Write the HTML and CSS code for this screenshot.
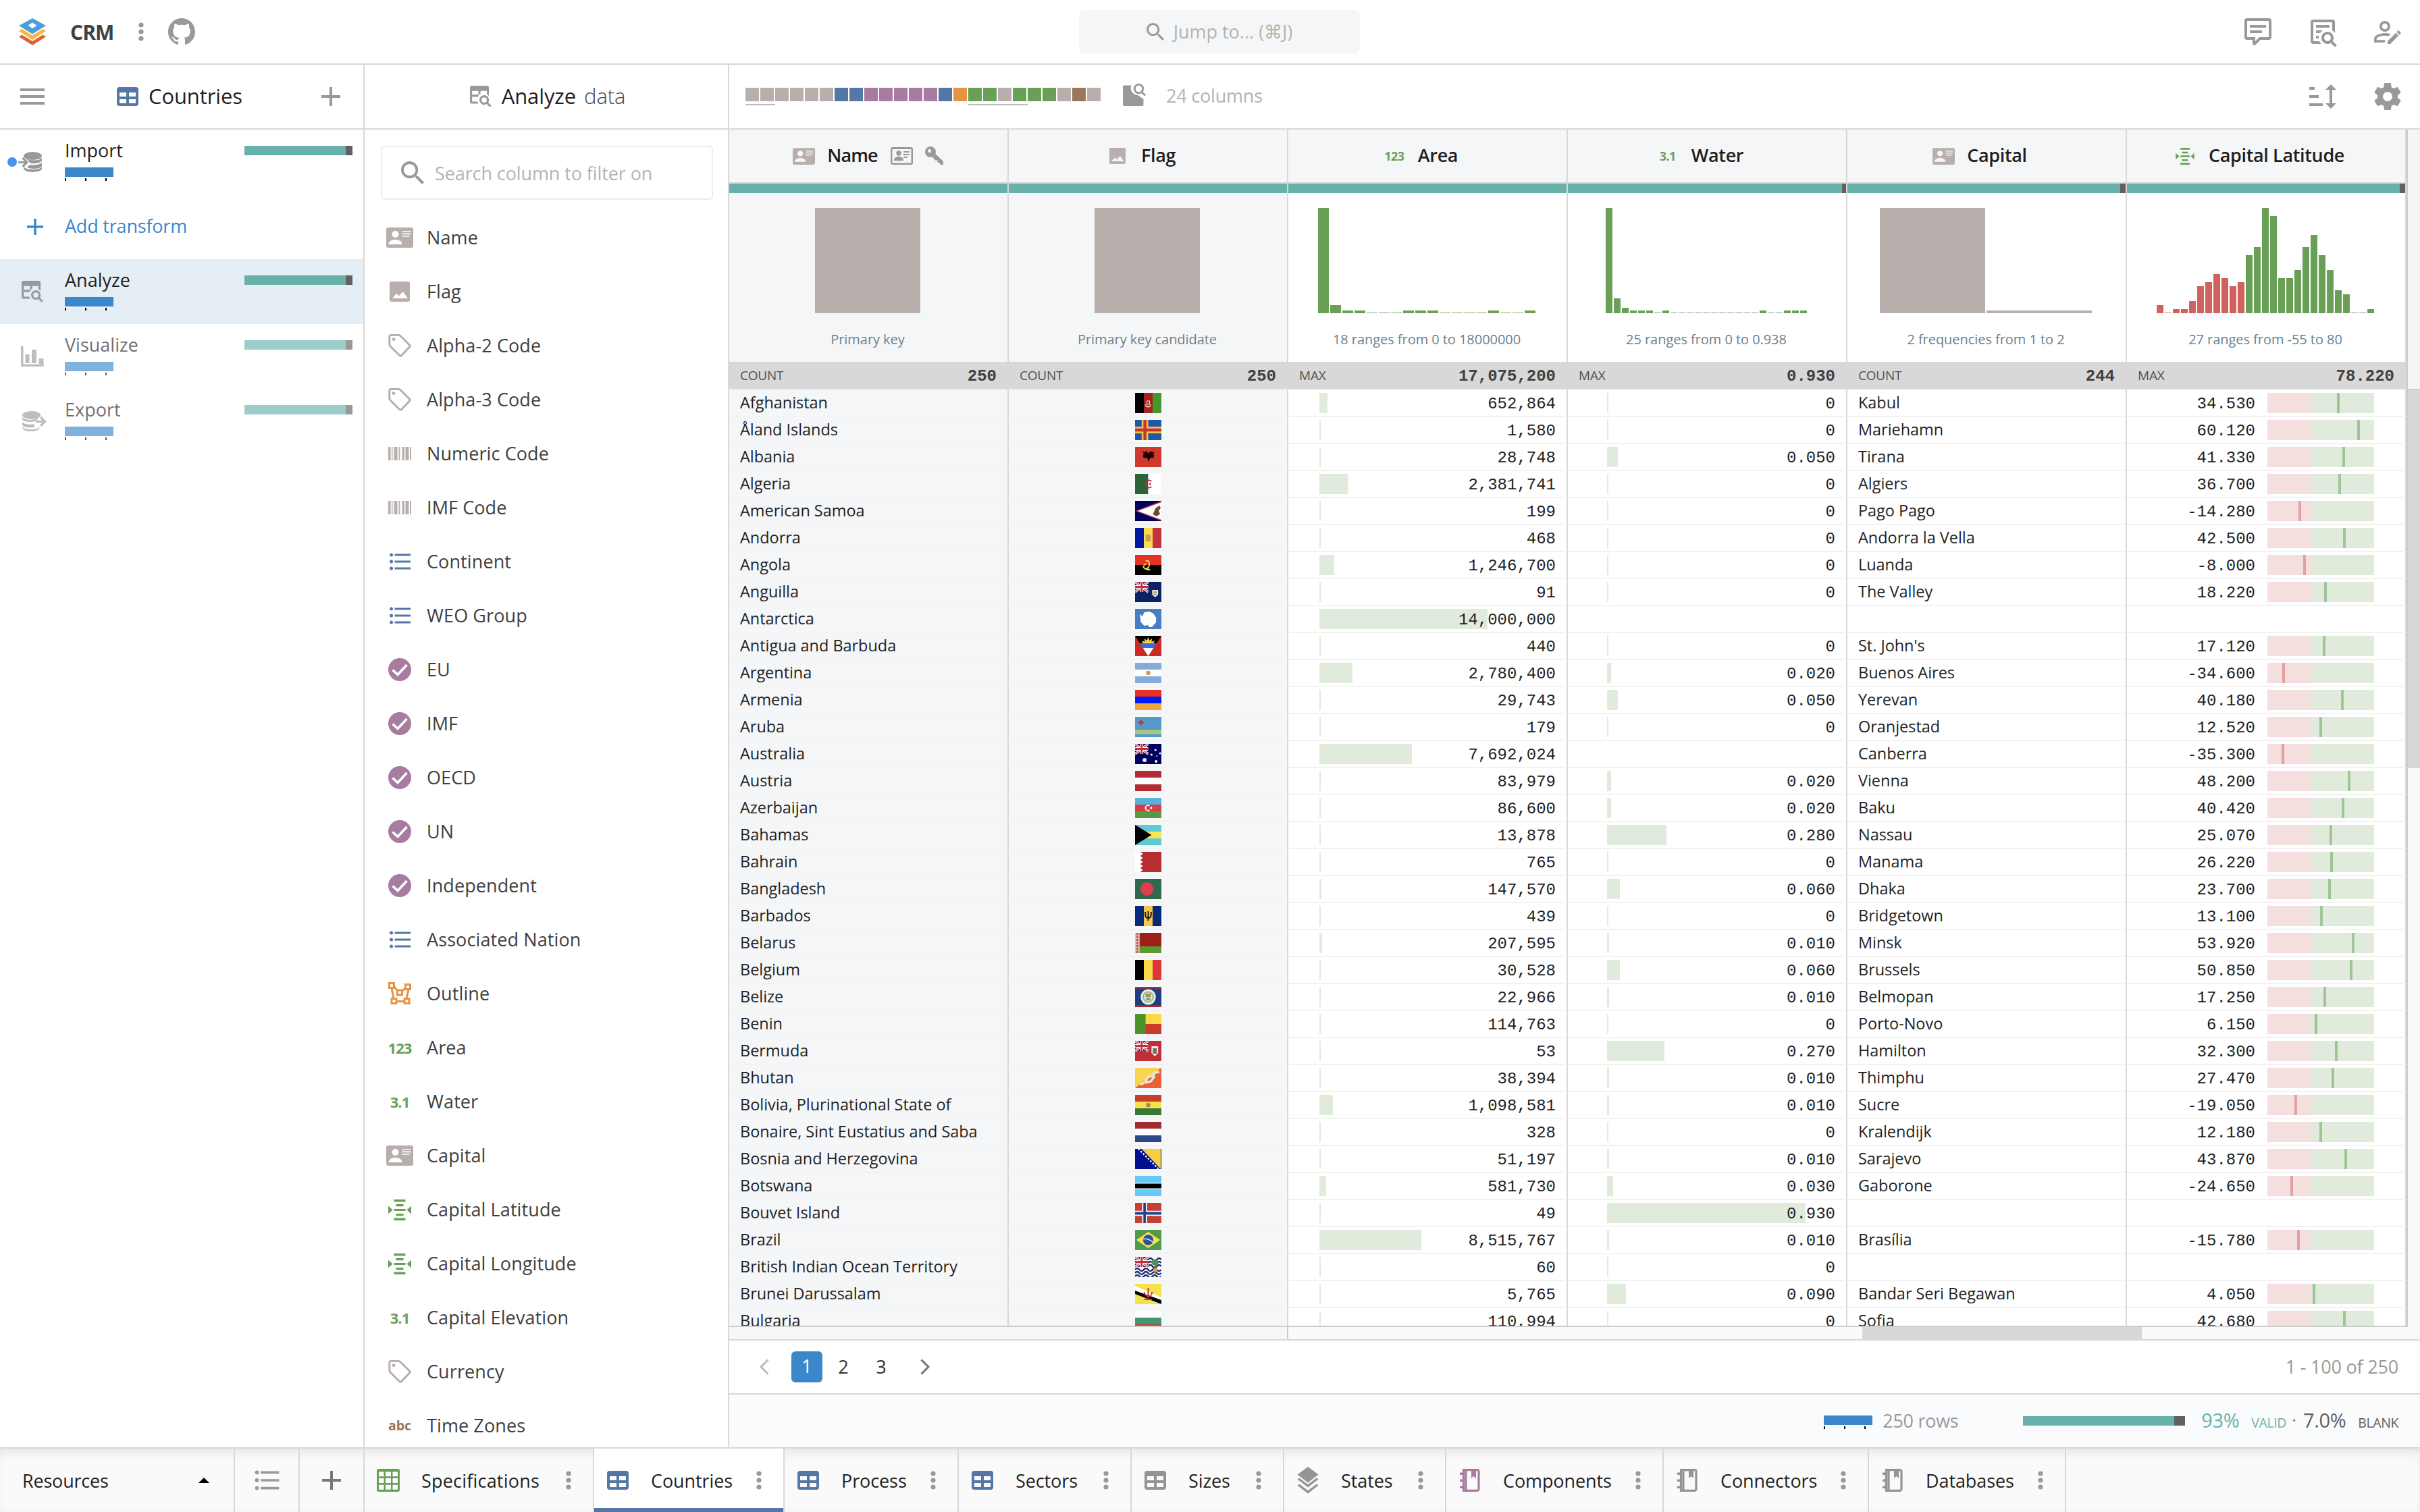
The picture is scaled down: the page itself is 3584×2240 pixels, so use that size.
FILE: index.html
```html
<!DOCTYPE html>
<html lang="en">
<head>
<meta charset="utf-8">
<title>CRM – Countries</title>
<link rel="stylesheet" href="styles.css">
</head>
<body>
<svg class="defs" aria-hidden="true">
  <symbol id="i-logo" viewBox="0 0 40 40"><path fill="#e0603a" d="M0 27.500l4.500-3L20 34l15.500-9.500 4.500 3L20 40z"/><path fill="#f5b73d" d="M0 19l4.500-3L20 25.500 35.500 16l4.500 3-20 13z"/><path fill="#4c9fd8" fill-rule="evenodd" d="M20 0l20 11-20 12.500L0 11zM20 6.500L13.500 10.700 20 15l6.500-4.300z"/></symbol>
  <symbol id="i-dots" viewBox="0 0 8 28"><circle cx="4" cy="4" r="3.600"/><circle cx="4" cy="14" r="3.600"/><circle cx="4" cy="24" r="3.600"/></symbol>
  <symbol id="i-github" viewBox="0 0 16 16"><path d="M8 0C3.580 0 0 3.580 0 8c0 3.540 2.290 6.530 5.470 7.590.4.070.55-.17.55-.38 0-.19-.01-.82-.01-1.490-2.010.37-2.530-.49-2.690-.94-.09-.23-.48-.94-.82-1.130-.28-.15-.68-.52-.01-.53.63-.01 1.080.58 1.230.82.72 1.210 1.870.87 2.330.66.07-.52.28-.87.51-1.070-1.780-.2-3.640-.89-3.640-3.950 0-.87.31-1.590.82-2.150-.08-.2-.36-1.020.08-2.120 0 0 .67-.21 2.200.82.64-.18 1.320-.27 2-.27.68 0 1.360.09 2 .27 1.530-1.040 2.200-.82 2.200-.82.44 1.100.16 1.920.08 2.120.51.56.82 1.270.82 2.150 0 3.070-1.870 3.750-3.650 3.950.29.25.54.73.54 1.480 0 1.070-.01 1.930-.01 2.200 0 .21.15.46.55.38A8.013 8.013 0 0016 8c0-4.420-3.580-8-8-8z"/></symbol>
  <symbol id="i-search" viewBox="3 3 17.500 17.500"><path d="M9.500 3A6.500 6.500 0 0 1 16 9.500c0 1.610-.59 3.090-1.560 4.230l.27.27h.79l5 5-1.500 1.500-5-5v-.79l-.27-.27A6.516 6.516 0 0 1 9.500 16a6.500 6.500 0 1 1 0-13m0 2a4.500 4.500 0 1 0 0 9 4.500 4.500 0 0 0 0-9z"/></symbol>
  <symbol id="i-comment" viewBox="0 0 24 24"><path d="M9 22a1 1 0 0 1-1-1v-3H4a2 2 0 0 1-2-2V4a2 2 0 0 1 2-2h16a2 2 0 0 1 2 2v12a2 2 0 0 1-2 2h-6.100l-3.700 3.710c-.2.19-.45.29-.7.29H9m1-6v3.080L13.080 16H20V4H4v12h6M6 7h12v2H6V7m0 4h9v2H6v-2z"/></symbol>
  <symbol id="i-docsearch" viewBox="0 0 24 24"><path d="M5 3h14a2 2 0 0 1 2 2v8.030a6.500 6.500 0 0 0-2-2.030V5H5v14h4.500c.31.75.76 1.420 1.310 2H5a2 2 0 0 1-2-2V5a2 2 0 0 1 2-2zM7 7h10v2H7zM7 11h5.030A6.400 6.400 0 0 0 10 13H7zM7 15h2.180c-.11.48-.18.98-.18 1.500V17H7zM15.500 12a4.500 4.500 0 0 1 3.810 6.900l3.080 3.100L21 23.390l-3.120-3.070A4.500 4.500 0 1 1 15.500 12m0 2a2.500 2.500 0 1 0 0 5 2.500 2.500 0 0 0 0-5z"/></symbol>
  <symbol id="i-useredit" viewBox="0 0 24 24"><path d="M21.700 13.350l-1 1-2.050-2.050 1-1a.55.55 0 0 1 .77 0l1.280 1.280c.21.21.21.56 0 .77M12 18.940l6.060-6.060 2.050 2.050L14.060 21H12v-2.060M10 13c-2.670 0-8 1.340-8 4v3h8v-1.900H3.900V17c0-.64 3.130-2.100 6.100-2.100.96 0 1.940.15 2.830.37l1.510-1.510C12.900 13.300 11.400 13 10 13zM10 4a4 4 0 1 0 0 8 4 4 0 0 0 0-8m0 1.900a2.100 2.100 0 1 1 0 4.200 2.100 2.100 0 0 1 0-4.200z"/></symbol>
  <symbol id="i-sort" viewBox="0 0 24 24"><path d="M2 5h4v2H2zM2 11h7v2H2zM2 17h10v2H2zM18 3l4 4h-3v10h3l-4 4-4-4h3V7h-3z"/></symbol>
  <symbol id="i-gear" viewBox="0 0 24 24"><path d="M12 15.500A3.500 3.500 0 0 1 8.500 12 3.500 3.500 0 0 1 12 8.500a3.500 3.500 0 0 1 3.500 3.500 3.500 3.500 0 0 1-3.500 3.500m7.430-2.530c.04-.32.07-.64.07-.97 0-.33-.03-.66-.07-1l2.110-1.630c.19-.15.24-.42.12-.64l-2-3.460c-.12-.22-.39-.31-.61-.22l-2.490 1c-.52-.39-1.060-.73-1.690-.98l-.37-2.650A.506.506 0 0 0 14 2h-4c-.25 0-.46.18-.5.42l-.37 2.650c-.63.25-1.170.59-1.690.98l-2.490-1c-.22-.09-.49 0-.61.22l-2 3.460c-.13.22-.07.49.12.64L4.570 11c-.04.34-.07.67-.07 1 0 .33.03.65.07.97l-2.110 1.660c-.19.15-.25.42-.12.64l2 3.460c.12.22.39.3.61.22l2.490-1.010c.52.4 1.060.74 1.690.99l.37 2.650c.04.24.25.42.5.42h4c.25 0 .46-.18.5-.42l.37-2.650c.63-.26 1.170-.59 1.690-.99l2.490 1.010c.22.08.49 0 .61-.22l2-3.460c.12-.22.07-.49-.12-.64l-2.110-1.660z"/></symbol>
  <symbol id="i-menu" viewBox="0 0 36 24"><path d="M0 0h36v4H0zM0 10h36v4H0zM0 20h36v4H0z"/></symbol>
  <symbol id="i-table" viewBox="0 0 32 28"><path fill-rule="evenodd" d="M4 0h24a4 4 0 0 1 4 4v20a4 4 0 0 1-4 4H4a4 4 0 0 1-4-4V4a4 4 0 0 1 4-4zM4 8v6h10V8zM18 8v6h10V8zM4 18v6h10v-6zM18 18v6h10v-6z"/></symbol>
  <symbol id="i-plus" viewBox="0 0 28 28"><path d="M12 0h4v12h12v4H16v12h-4V16H0v-4h12z"/></symbol>
  <symbol id="i-tsearch" viewBox="2 3 20.500 20.500"><path d="M4 3h14a2 2 0 0 1 2 2v7.800a6.500 6.500 0 0 0-2-1.800V8h-6v2.500l-2 1.700V8H4v3.500h6v2H4V18h5.200c.2.750.5 1.400.9 2H4a2 2 0 0 1-2-2V5a2 2 0 0 1 2-2zM15.500 12a4.500 4.500 0 0 1 3.810 6.900l3.080 3.100L21 23.390l-3.120-3.070A4.500 4.500 0 1 1 15.500 12m0 2a2.500 2.500 0 1 0 0 5 2.500 2.500 0 0 0 0-5z"/></symbol>
  <symbol id="i-import" viewBox="0 0 36 30"><ellipse cx="21.500" cy="6" rx="13.500" ry="6"/><path d="M11 9.500c3 3 21 5 24-1v4.500c-2 4-12 5-17 3.500zM17 19c6 1 15 0 18-3v5c-2 4.500-16 5-22 2zM8.500 22.500c5 5 22 4.500 26.500 0V25c-2 6.500-24 6.500-27 0z"/><path fill="none" stroke="currentColor" stroke-width="3.200" d="M0 15.500h11.500M6.500 9l6.500 6.500L6.500 22"/></symbol>
  <symbol id="i-export" viewBox="0 0 36 30"><ellipse cx="13.500" cy="6" rx="13.500" ry="6"/><path d="M0 8.500c3 6 19 5.500 24 .5l-3 5.500c-6 2-18 2.500-21-2zM0 16c3 3.500 10 4.500 18 3.500v4.500C12 24.500 2 25 0 20.500zM0 23.500c4 4.500 17 5 23 2l3-1.500c-2 8-23 8-26 1z"/><path fill="none" stroke="currentColor" stroke-width="3.200" d="M20 15.500h12.500M27 9l6.500 6.500L27 22"/></symbol>
  <symbol id="i-chart" viewBox="0 0 34 30"><path d="M0 0h3.500v27H0zM0 26.500h34V30H0zM6.500 12h6v13h-6zM16 5h7v20h-7zM26.500 18h7v8h-7z"/></symbol>
  <symbol id="i-card" viewBox="0 0 40 30"><path fill-rule="evenodd" d="M3 0h34a3 3 0 0 1 3 3v24a3 3 0 0 1-3 3H3a3 3 0 0 1-3-3V3a3 3 0 0 1 3-3zM13.500 5a5 5 0 1 0 0 10 5 5 0 0 0 0-10zM3.500 25h20c0-4-4-7-10-7s-10 3-10 7zM23.500 5v1.600h13V5zM23.500 8.600v1.600h13V8.600zM23.500 12.200v1.600h11v-1.600z"/></symbol>
  <symbol id="i-cardo" viewBox="0 0 33 26"><path fill-rule="evenodd" d="M3 0h27a3 3 0 0 1 3 3v20a3 3 0 0 1-3 3H3a3 3 0 0 1-3-3V3a3 3 0 0 1 3-3zM2.500 3v20.500h28V3z"/><circle cx="12" cy="9" r="3.700"/><path d="M5 20c0-5 4-6 7-6s7 1 7 6zM19 6h9v2h-9zM19 10h9v2h-9zM19 14h6v2h-6z"/></symbol>
  <symbol id="i-key" viewBox="0 0 28 28"><path fill-rule="evenodd" d="M8 0a8 8 0 0 1 8 8c0 1.200-.2 2-.6 3L27 22v5h-5v-3h-3.500v-3.500H15L11 15.500c-1 .4-2 .5-3 .5A8 8 0 0 1 8 0zM6.500 4a2.500 2.500 0 1 0 0 5 2.500 2.500 0 0 0 0-5z"/></symbol>
  <symbol id="i-image" viewBox="0 0 30 30"><path fill-rule="evenodd" d="M3 0h24a3 3 0 0 1 3 3v24a3 3 0 0 1-3 3H3a3 3 0 0 1-3-3V3a3 3 0 0 1 3-3zM4 25h23l-7.500-10-5.500 6.500-4-3.500z"/></symbol>
  <symbol id="i-tag" viewBox="0 0 34 34"><path fill="none" stroke="currentColor" stroke-width="3" stroke-linejoin="round" d="M1.800 3.500a2 2 0 0 1 2-2h11.500a4 4 0 0 1 2.800 1.200l13.300 13.300a2.200 2.200 0 0 1 0 3.100L19.700 31.500a2.200 2.200 0 0 1-3.100 0L3 18a4 4 0 0 1-1.200-2.800z"/><circle cx="8" cy="7.700" r="2.400"/></symbol>
  <symbol id="i-barcode" viewBox="0 0 34 20"><path d="M0 0h3.500v20H0zM5 0h1.500v20H5zM8.500 0h5v20h-5zM15.500 0h1.800v20h-1.800zM20.500 0H24v20h-3.500zM25.500 0h5v20h-5zM32 0h2v20h-2z"/></symbol>
  <symbol id="i-list" viewBox="0 0 31 26"><circle cx="2.500" cy="3" r="2.500"/><circle cx="2.500" cy="13" r="2.500"/><circle cx="2.500" cy="23" r="2.500"/><path d="M7.500 1.400H31v3.200H7.500zM7.500 11.400H31v3.200H7.500zM7.500 21.400H31v3.200H7.500z"/></symbol>
  <symbol id="i-check" viewBox="0 0 34 34"><circle cx="17" cy="17" r="17"/><path fill="none" stroke="#fff" stroke-width="3.600" d="M6.500 17.500l7.500 7L27.500 10"/></symbol>
  <symbol id="i-polygon" viewBox="0 0 34 34"><path fill="none" stroke="currentColor" stroke-width="3" d="M1.500 1.500h7v7h-7zM25.500 3.500h7v7h-7zM13.500 12h7v7h-7zM5 24.500h7v7H5zM24 24.500h7v7h-7zM9 7l5 6M25 9l-4 4M5 9l3 15M30 11l-3 13M12 28.500h12"/></symbol>
  <symbol id="i-coord" viewBox="0 0 34 31"><path d="M8.500 0h17v3.400h-17zM11.500 7h11v3.200h-11zM8.500 13.900h17v3.200h-17zM11.500 21h11v3.200h-11zM8.500 27.600h17V31h-17zM0 9.500l6.500 6L0 21.500zM34 9.500l-6.500 6 6.500 6z"/></symbol>
  <symbol id="i-sheetsearch" viewBox="0 0 34 34"><path d="M2 3.500h10.500a10.500 10.500 0 0 0 2 11c2 2.300 5 3.500 8 3.500l8 6V32a2 2 0 0 1-2 2H2a2 2 0 0 1-2-2V5.500a2 2 0 0 1 2-2z"/><path fill="none" stroke="currentColor" stroke-width="3" d="M27.500 13l5.500 5.500"/><circle cx="23.500" cy="8.500" r="6.300" fill="none" stroke="currentColor" stroke-width="3"/></symbol>
  <symbol id="i-grid" viewBox="0 0 34 34"><path fill-rule="evenodd" d="M3 0h28a3 3 0 0 1 3 3v28a3 3 0 0 1-3 3H3a3 3 0 0 1-3-3V3a3 3 0 0 1 3-3zM3 4.500v6.800h7.500V4.500zM13 4.500v6.800h8V4.500zM23.500 4.500v6.800H31V4.500zM3 14v7h7.500v-7zM13 14v7h8v-7zM23.500 14v7H31v-7zM3 23.700v7h7.500v-7zM13 23.700v7h8v-7zM23.500 23.700v7H31v-7z"/></symbol>
  <symbol id="i-layers" viewBox="0 0 32 40"><path d="M16 0l15.500 11.500L16 23.500.5 11.500zM.5 18.500L3.200 16.500 16 26.300l12.800-9.800 2.700 2L16 30.500zM.5 27.500l2.700-2L16 35.300l12.800-9.800 2.700 2L16 39.800z"/></symbol>
  <symbol id="i-book" viewBox="0 0 30 34"><path fill="none" stroke="currentColor" stroke-width="3.200" d="M5.500 1.600h20a2.500 2.500 0 0 1 2.500 2.500v25.800a2.500 2.500 0 0 1-2.500 2.500h-20zM9 2v30"/><path d="M0 5.500h5V9H0zM0 15.500h5V19H0zM0 25.500h5V29H0zM17 3h7v11l-3.500-3-3.500 3z"/></symbol>
  <symbol id="i-left" viewBox="0 0 14 24"><path fill="none" stroke="currentColor" stroke-width="3" d="M12.500 1.500L2 12l10.500 10.500"/></symbol>
  <symbol id="i-right" viewBox="0 0 14 24"><path fill="none" stroke="currentColor" stroke-width="3" d="M1.500 1.500L12 12 1.500 22.500"/></symbol>
</svg>

<div class="app">
  <header class="topbar">
    <svg class="logo"><use href="#i-logo"/></svg>
    <span class="brand">CRM</span>
    <svg class="dots"><use href="#i-dots"/></svg>
    <svg class="github"><use href="#i-github"/></svg>
    <div class="jump"><svg class="ic26"><use href="#i-search"/></svg><span>Jump to... (⌘J)</span></div>
    <nav class="actions"><svg class="ic48"><use href="#i-comment"/></svg><svg class="ic48"><use href="#i-docsearch"/></svg><svg class="ic48"><use href="#i-useredit"/></svg></nav>
  </header>

  <div class="work">
    <aside class="steps">
      <div class="panel-head">
        <svg class="menu"><use href="#i-menu"/></svg>
        <div class="head-title resource"><svg class="ic-table blue"><use href="#i-table"/></svg><span>Countries</span></div>
        <svg class="plus-head"><use href="#i-plus"/></svg>
      </div>
      <div class="step current"><div class="step-icon"><i class="dot"></i><svg class="ic-db"><use href="#i-import"/></svg></div><div class="step-body"><span>Import</span><div class="rowbar"></div><div class="ticks"><i></i><i></i><i></i></div></div><div class="valid"></div></div>
      <div class="step add"><svg class="plus-add"><use href="#i-plus"/></svg><span>Add transform</span></div>
      <div class="step selected"><div class="step-icon"><svg class="ic-ts"><use href="#i-tsearch"/></svg></div><div class="step-body"><span>Analyze</span><div class="rowbar"></div><div class="ticks"><i></i><i></i><i></i></div></div><div class="valid"></div></div>
      <div class="step faded"><div class="step-icon"><svg class="ic-chart"><use href="#i-chart"/></svg></div><div class="step-body"><span>Visualize</span><div class="rowbar"></div><div class="ticks"><i></i><i></i><i></i></div></div><div class="valid"></div></div>
      <div class="step faded"><div class="step-icon"><svg class="ic-db export"><use href="#i-export"/></svg></div><div class="step-body"><span>Export</span><div class="rowbar"></div><div class="ticks"><i></i><i></i><i></i></div></div><div class="valid"></div></div>
    </aside>

    <aside class="filters">
      <div class="panel-head centered"><div class="head-title"><svg class="ic-ts"><use href="#i-tsearch"/></svg><span>Analyze <em>data</em></span></div></div>
      <div class="searchbox"><svg class="ic34"><use href="#i-search"/></svg><span>Search column to filter on</span></div>
      <ul class="fields" id="fields"></ul>
    </aside>

    <main class="data">
      <div class="toolbar">
        <div class="minimap" id="minimap"></div>
        <svg class="ic34 sheet"><use href="#i-sheetsearch"/></svg>
        <span class="colcount">24 columns</span>
        <nav class="actions"><svg class="ic48"><use href="#i-sort"/></svg><svg class="ic48"><use href="#i-gear"/></svg></nav>
      </div>
      <div class="sheetwrap">
        <div class="sheet-main">
          <div class="sheetgrid" id="sheet"></div>
          <div class="hscroll"><div class="hfrozen"></div><div class="hthumb"></div></div>
        </div>
        <div class="vscroll"><div class="vthumb"></div></div>
      </div>
      <div class="pager">
        <svg class="chev off"><use href="#i-left"/></svg><b>1</b><span>2</span><span>3</span><svg class="chev"><use href="#i-right"/></svg>
        <span class="range">1 - 100 of 250</span>
      </div>
      <div class="status">
        <div class="rowinfo"><div class="rowbar"></div><div class="ticks"><i></i><i></i><i></i></div></div>
        <span class="rows">250 rows</span>
        <div class="valid"></div>
        <span class="pct ok">93%</span><span class="lbl ok">VALID</span><span class="sep">·</span><span class="pct">7.0%</span><span class="lbl">BLANK</span>
      </div>
    </main>
  </div>

  <footer class="tabs">
    <div class="tab-res"><span>Resources</span><i></i></div>
    <div class="tab-btn"><svg class="ic-tlist"><use href="#i-list"/></svg></div>
    <div class="tab-btn"><svg class="plus-tab"><use href="#i-plus"/></svg></div>
    <div class="tab w-spec"><span class="slot"><svg class="ic34 green"><use href="#i-grid"/></svg></span><span class="name">Specifications</span><svg class="dots"><use href="#i-dots"/></svg></div>
    <div class="tab w-coun active"><span class="slot"><svg class="ic-table blue"><use href="#i-table"/></svg></span><span class="name">Countries</span><svg class="dots"><use href="#i-dots"/></svg></div>
    <div class="tab w-proc"><span class="slot"><svg class="ic-table blue"><use href="#i-table"/></svg></span><span class="name">Process</span><svg class="dots"><use href="#i-dots"/></svg></div>
    <div class="tab w-sect"><span class="slot"><svg class="ic-table blue"><use href="#i-table"/></svg></span><span class="name">Sectors</span><svg class="dots"><use href="#i-dots"/></svg></div>
    <div class="tab w-size"><span class="slot"><svg class="ic-table"><use href="#i-table"/></svg></span><span class="name">Sizes</span><svg class="dots"><use href="#i-dots"/></svg></div>
    <div class="tab w-stat"><span class="slot"><svg class="ic-layers"><use href="#i-layers"/></svg></span><span class="name">States</span><svg class="dots"><use href="#i-dots"/></svg></div>
    <div class="tab w-comp"><span class="slot"><svg class="ic-book purple"><use href="#i-book"/></svg></span><span class="name">Components</span><svg class="dots"><use href="#i-dots"/></svg></div>
    <div class="tab w-conn"><span class="slot"><svg class="ic-book"><use href="#i-book"/></svg></span><span class="name">Connectors</span><svg class="dots"><use href="#i-dots"/></svg></div>
    <div class="tab w-data"><span class="slot"><svg class="ic-book"><use href="#i-book"/></svg></span><span class="name">Databases</span><svg class="dots"><use href="#i-dots"/></svg></div>
  </footer>
</div>
<script src="app.js"></script>
</body>
</html>
```

FILE: styles.css
```css
* { box-sizing: border-box; margin: 0; padding: 0; }
html, body { width: 3584px; height: 2240px; overflow: hidden; }
body {
  font-family: "Open Sans", "Noto Sans", "DejaVu Sans", sans-serif;
  font-size: 27px;
  color: #1f1f1f;
  background: #fff;
}
svg { display: block; fill: currentColor; flex: none; }
.defs { position: absolute; width: 0; height: 0; }
i, em, b { font-style: normal; }

.app { display: flex; flex-direction: column; width: 3584px; height: 2240px; }
.blue { color: #5577a5; }
.green { color: #6a9f58; }
.purple { color: #a87ca0; }
.ic26 { width: 26px; height: 26px; }
.ic34 { width: 34px; height: 34px; }
.ic48 { width: 48px; height: 48px; }
.ic-table { width: 32px; height: 28px; }
.ic-ts { width: 32px; height: 32px; }
.ic-db { width: 36px; height: 30px; }
.ic-chart { width: 34px; height: 30px; }
.ic-layers { width: 32px; height: 40px; }
.ic-book { width: 30px; height: 34px; }
.dots { width: 8px; height: 28px; color: #999; }

/* top bar */
.topbar {
  display: flex;
  align-items: center;
  height: 96px;
  padding: 0 24px 0 28px;
  border-bottom: 2px solid #d8d8d8;
  color: #999;
}
.logo { width: 40px; height: 40px; }
.brand { margin-left: 36px; width: 101px; font-size: 30px; font-weight: 700; color: #404040; letter-spacing: -.9px; }
.github { width: 40px; height: 40px; margin-left: 36px; }
.jump {
  display: flex; align-items: center; justify-content: center; gap: 14px;
  width: 416px; height: 64px; margin-left: 1309px;
  border-radius: 8px; background: #f5f6f8; color: #999;
}
.jump span { color: #b3b3b3; padding-bottom: 1px; letter-spacing: 0; }
.actions { display: flex; gap: 48px; color: #999; margin-left: auto; }

.work { display: flex; height: 2048px; }

/* steps */
.steps { width: 540px; border-right: 2px solid #d8d8d8; }
.panel-head {
  display: flex; align-items: center; justify-content: space-between;
  height: 96px; padding: 0 34px 0 30px;
  border-bottom: 2px solid #d8d8d8; color: #999;
}
.panel-head.centered { justify-content: center; padding: 0 0 0 4px; }
.head-title { display: flex; align-items: center; gap: 15px; font-size: 31px; letter-spacing: -.1px; }
.head-title.resource { margin-right: 10px; }
.head-title span { color: #1f1f1f; padding-bottom: 2px; }
.head-title em { font-weight: 300; color: #444; margin-left: 4px; }
.menu { width: 36px; height: 24px; }
.plus-head { width: 28px; height: 28px; }
.step { position: relative; display: grid; grid-template-columns: 96px 1fr 160px; height: 96px; padding-right: 16px; }
.step-icon { display: flex; align-items: center; justify-content: center; color: #999; }
.dot { position: absolute; left: 11px; top: 41px; width: 14px; height: 14px; border-radius: 50%; background: #4394ee; }
.step .ic-db { margin-right: 6px; }
.step .ic-db.export { margin: 0 0 0 6px; }
.step-body { padding-top: 12px; line-height: 37px; letter-spacing: 0; }
.step-body span { display: block; }
.step-body .rowbar { margin-top: 7px; }
.rowbar { width: 72px; height: 14px; background: #3a87cc; }
.ticks { display: flex; gap: 28px; margin-top: 2px; }
.ticks i { width: 2px; height: 4px; background: #000; }
.valid { height: 14px; background: linear-gradient(to right, #66b1aa 93.500%, #606060 93.500%); }
.step .valid { margin-top: 24px; width: 160px; }
.step.selected { background: #e5edf5; }
.step.faded .step-icon, .step.faded .step-body, .step.faded .valid { opacity: .64; }
.step.add { display: flex; align-items: center; color: #3a87cc; padding-left: 40px; gap: 32px; }
.step.add span { padding-bottom: 3px; letter-spacing: -.2px; }
.plus-add { width: 24px; height: 24px; }

/* column filter */
.filters { width: 540px; height: 2048px; overflow: hidden; border-right: 2px solid #d8d8d8; }
.searchbox {
  display: flex; align-items: center; gap: 16px;
  width: 492px; height: 80px; margin: 24px 0 16px 24px; padding-left: 28px;
  border: 2px solid #ebecee; border-radius: 6px; color: #999;
}
.searchbox span { color: #b3b3b3; letter-spacing: -.1px; }
.fields { list-style: none; }
.fields li { display: grid; grid-template-columns: 40px 1fr; column-gap: 20px; align-items: center; height: 80px; padding-left: 32px; color: #404040; letter-spacing: .1px; }
.fields li > span:last-child { padding-bottom: 2px; }
.slot { display: flex; justify-content: center; align-items: center; }
.t-text { color: #b8afac; }
.t-enum { color: #5577a5; }
.t-bool { color: #a87ca0; }
.t-geo { color: #e49444; }
.t-num { color: #6a9f58; }
.t-str { color: #9a765c; }
.glyph { font-weight: 700; font-size: 22px; line-height: 26px; letter-spacing: -.9px; }
.glyph.abc { font-size: 19.500px; letter-spacing: 0; }
.g-card { width: 40px; height: 30px; }
.g-image { width: 30px; height: 30px; }
.g-tag { width: 34px; height: 34px; }
.g-barcode { width: 34px; height: 20px; }
.g-list { width: 31px; height: 26px; }
.g-check { width: 34px; height: 34px; }
.g-polygon { width: 34px; height: 34px; }
.g-coord { width: 34px; height: 31px; }

/* data */
.data { width: 2504px; display: flex; flex-direction: column; }
.toolbar { display: flex; align-items: center; height: 96px; padding: 0 24px; border-bottom: 2px solid #d8d8d8; }
.minimap { display: flex; gap: 2px; height: 26px; }
.minimap i { width: 20px; height: 20px; background: currentColor; }
.minimap i.seen { height: 26px; width: 22px; margin-right: -2px; background: linear-gradient(to right, currentColor 20px, #fff 20px) top / 22px 20px no-repeat, linear-gradient(#bababa, #bababa) bottom / 22px 2px no-repeat; }
.sheet { margin-left: 33px; margin-bottom: 7px; color: #999; }
.colcount { margin-left: 30px; color: #b3b3b3; padding-bottom: 4px; letter-spacing: -.2px; }

.sheetwrap { display: flex; height: 1794px; border-bottom: 2px solid #d8d8d8; }
.sheet-main { width: 2486px; }
.sheetgrid {
  display: grid; grid-template-columns: repeat(6, 414px);
  grid-template-rows: 80px 14px 250px 42px; grid-auto-rows: 40px;
  height: 1774px; overflow: hidden;
  border-right: 2px solid #ccc; border-bottom: 2px solid #ccc;
}
.sheetgrid > div { border-right: 2px solid #d8d8d8; }
.th {
  display: flex; align-items: center; justify-content: center; gap: 19px;
  background: #f5f6f8; border-bottom: 2px solid #d8d8d8; font-weight: 600; letter-spacing: -.35px; padding-right: 20px;
}
.th.keyed { padding-right: 0; letter-spacing: -.9px; }
.th.keyed .extra { display: flex; align-items: center; gap: 18px; color: #999; }
.th .slot { width: 32px; }
.th .glyph { font-size: 18px; letter-spacing: -.6px; }
.th .name { padding-bottom: 3px; }
.th .g-card { width: 33px; height: 25px; }
.th .g-image { width: 24px; height: 24px; }
.th .g-coord { width: 28px; height: 25px; }
.cardo { width: 33px; height: 26px; }
.key { width: 28px; height: 28px; }
.quality { background: #66b1aa; display: flex; justify-content: flex-end; }
.quality i { background: #606060; }
.hist { padding: 22px 2px 0 0; display: flex; flex-direction: column; align-items: center; background: #fff; }
.frozen.hist, .frozen.cell { background: #f5f6f8; }
.bars { display: flex; align-items: flex-end; gap: 2px; height: 156px; }
.bars i { background: currentColor; }
.hist p { margin-top: 23px; font-size: 20px; line-height: 32px; color: #6b818f; letter-spacing: -.05px; }
.stat {
  display: flex; align-items: center; justify-content: space-between; padding: 0 16px;
  background: #d8d8d8; border-bottom: 2px solid #eee; color: #505050; font-size: 19px; letter-spacing: -.2px;
}
.stat b, .num { font-family: "Liberation Mono", "DejaVu Sans Mono", monospace; font-size: 24px; letter-spacing: 0; }
.stat b { color: #404040; padding-top: 2px; }
.stat span { padding-bottom: 1px; }
.cell { position: relative; display: flex; align-items: center; padding: 0 16px; border-bottom: 2px solid #f2f2f2; font-size: 23.500px; white-space: nowrap; letter-spacing: -.04px; }
.cell > span.txt { padding-bottom: 3px; }
.num { margin-left: auto; padding-top: 2px; position: relative; }
.flagcell { justify-content: center; }
.flag { width: 39px; height: 30px; margin-left: 1px; }
.bar { position: absolute; top: 4px; height: 30px; left: 46px; background: #e0ebdb; }
.bar.min { background: #e4e7e0; }
.bar.water { left: 58px; }
.gauge { position: relative; width: 158px; height: 30px; margin: 0 30px 0 18px; background: linear-gradient(to right, #f4dede 64px, #e0ebdb 64px); }
.gauge i { position: absolute; top: 0; width: 4px; height: 30px; background: #9fc597; }
.gauge i.neg { background: #e2a0a0; }

.hscroll { display: flex; height: 18px; background: #fafafa; }
.hfrozen { width: 828px; border-right: 2px solid #ccc; background: #f7f7f7; }
.hthumb { width: 414px; margin-left: 850px; background: #d8d8d8; }
.vscroll { width: 18px; height: 1792px; background: #fafafa; }
.vscroll::before { content: ""; display: block; height: 384px; background: #f5f5f5; }
.vthumb { height: 562px; background: #d8d8d8; border-top: 2px solid #ccc; }

.pager { display: flex; align-items: center; height: 80px; padding: 0 32px 0 45px; border-bottom: 2px solid #d8d8d8; color: #333; }
.pager .chev { width: 14px; height: 24px; color: #777; }
.pager .chev.off { color: #bbb; }
.pager b { width: 46px; height: 46px; margin-left: 33px; border-radius: 6px; background: #3a87cc; color: #fff; font-weight: 400; text-align: center; line-height: 44px; }
.pager span { width: 56px; text-align: center; padding-bottom: 2px; }
.pager b + span { margin-left: 3px; }
.pager span + .chev { margin-left: 30px; }
.pager .range { width: auto; margin-left: auto; color: #999; letter-spacing: -.2px; }
.status { display: flex; align-items: center; height: 78px; padding: 0 32px 0 0; background: #fafbfd; justify-content: flex-end; color: #999; }
.rowinfo { padding-top: 4px; width: 72px; }
.status .rows { margin-left: 15px; width: 110px; padding-bottom: 2px; white-space: nowrap; letter-spacing: -.3px; }
.status .valid { width: 240px; margin-left: 98px; }
.pct { font-size: 29px; color: #606060; padding-bottom: 3px; letter-spacing: -.4px; }
.lbl { font-size: 19.500px; color: #606060; margin-left: 18px; padding-top: 4px; letter-spacing: -.4px; }
.pct.ok { margin-left: 24px; }
.pct.ok, .lbl.ok { color: #66b1aa; }
.sep { margin: 0 10px 4px 8px; color: #777; }

/* tabs */
.tabs { position: relative; display: flex; height: 96px; border-top: 2px solid #d8d8d8; background: #fafafa; box-shadow: inset 0 12px 20px -10px rgba(0,0,0,.12), inset 0 -6px 14px -8px rgba(0,0,0,.06); }
.tabs > div { border-right: 2px solid #d8d8d8; display: flex; align-items: center; }
.tab-res { width: 348px; padding: 0 36px 0 33px; justify-content: space-between; letter-spacing: -.2px; }
.tab-res i { border: 8px solid transparent; border-top: 0; border-bottom: 8px solid #000; }
.tab-btn { width: 96px; justify-content: center; color: #777; }
.ic-tlist { width: 37px; height: 30px; color: #999; }
.plus-tab { width: 28px; height: 28px; }
.tab { padding: 0 32px 0 18px; letter-spacing: -.1px; color: #929497; }
.tab .slot { width: 34px; }
.tab .name { margin-left: 32px; color: #1f1f1f; }
.tab .dots { margin-left: auto; }
.tab.active { background: #fff; box-shadow: inset 0 -6px #5577a5; }
.w-spec { width: 340px; }
.w-spec .name { letter-spacing: .2px; }
.w-coun { width: 282px; }
.w-proc { width: 258px; }
.w-sect { width: 256px; }
.w-size { width: 226px; }
.w-stat { width: 240px; }
.w-comp { width: 322px; }
.w-conn { width: 304px; }
.w-data { width: 292px; }
```

FILE: app.js
```js
const use = (id, cls) => `<svg class="${cls}"><use href="#i-${id}"/></svg>`;

// Column types: colour class and icon (or short text glyph).
const types = {
  card: ['t-text', use('card', 'g-card')],
  image: ['t-text', use('image', 'g-image')],
  tag: ['t-text', use('tag', 'g-tag')],
  barcode: ['t-text', use('barcode', 'g-barcode')],
  list: ['t-enum', use('list', 'g-list')],
  check: ['t-bool', use('check', 'g-check')],
  polygon: ['t-geo', use('polygon', 'g-polygon')],
  int: ['t-num', '<span class="glyph">123</span>'],
  dec: ['t-num', '<span class="glyph">3.1</span>'],
  coord: ['t-num', use('coord', 'g-coord')],
  abc: ['t-str', '<span class="glyph abc">abc</span>'],
};
const slot = t => `<span class="slot ${types[t][0]}">${types[t][1]}</span>`;

const fields = [
  ['Name', 'card'], ['Flag', 'image'], ['Alpha-2 Code', 'tag'], ['Alpha-3 Code', 'tag'],
  ['Numeric Code', 'barcode'], ['IMF Code', 'barcode'], ['Continent', 'list'], ['WEO Group', 'list'],
  ['EU', 'check'], ['IMF', 'check'], ['OECD', 'check'], ['UN', 'check'], ['Independent', 'check'],
  ['Associated Nation', 'list'], ['Outline', 'polygon'], ['Area', 'int'], ['Water', 'dec'],
  ['Capital', 'card'], ['Capital Latitude', 'coord'], ['Capital Longitude', 'coord'],
  ['Capital Elevation', 'dec'], ['Currency', 'tag'], ['Time Zones', 'abc'],
];
document.getElementById('fields').innerHTML =
  fields.map(([n, t]) => `<li>${slot(t)}<span>${n}</span></li>`).join('');

const mini = [...fields.map(f => types[f[1]][0]), 't-text'];
const seen = [0, 1, 15, 16, 17, 18];
document.getElementById('minimap').innerHTML =
  mini.map((c, i) => `<i class="${c}${seen.includes(i) ? ' seen' : ''}"></i>`).join('');

// Flags, drawn on a 40 x 30 field.
const R = (x, y, w, h, f) => `<rect x="${x}" y="${y}" width="${w}" height="${h}" fill="${f}"/>`;
const P = (d, f) => `<path d="${d}" fill="${f}"/>`;
const C = (x, y, r, f) => `<circle cx="${x}" cy="${y}" r="${r}" fill="${f}"/>`;
const S = (d, c, w) => `<path d="${d}" fill="none" stroke="${c}" stroke-width="${w}"/>`;
const H = (...c) => c.map((f, i) => R(0, i * 30 / c.length, 40, 30 / c.length + .2, f)).join('');
const V = (...c) => c.map((f, i) => R(i * 40 / c.length, 0, 40 / c.length + .2, 30, f)).join('');
const jack = (b) => R(0, 0, 20, 15, b) + S('M0 0L20 15M20 0L0 15', '#fff', 3.500) + S('M0 0L20 15M20 0L0 15', '#cc3344', 1.200)
  + S('M10 0V15M0 7.500H20', '#fff', 5) + S('M10 0V15M0 7.500H20', '#cc2b3c', 2.800);
const flags = [
  V('#000', '#a5231b', '#46972b') + S('M16 17a4 4 0 1 0 8 0M18 12h4v5h-4zM16 20h8', '#f3dcd8', 1.200),
  R(0, 0, 40, 30, '#2155a5') + S('M15 0V30M0 15H40', '#f3c14b', 10) + S('M15 0V30M0 15H40', '#c5342f', 4.500),
  R(0, 0, 40, 30, '#cf382d') + P('M12 7l3 1 2-2 2 2 1.500 2 1.500-2 2-2 2 2 3-1-1 4 1 3-2 3-3-1-2 2-1.500 5-1.500-5-2-2-3 1-2-3 1-3z', '#1a0503'),
  V('#2c6339', '#fff') + S('M25 11a5.500 5.500 0 1 0 0 8', '#c8264a', 1.800) + C(23, 15, 1.500, '#c8264a'),
  R(0, 0, 40, 30, '#00005f') + P('M0 15L40 0V30z', '#b22a3b') + P('M4 15L40 2V28z', '#fff') + P('M27 20l4-9 6-4 2 3-3 5 2 4-5 4z', '#6b4a31'),
  V('#0018a0', '#f8de4b', '#c3313f') + R(16, 10, 8, 10, '#d39b5b') + R(18, 11.500, 4, 7, '#c8a04f'),
  H('#e73223', '#000') + S('M16 9c8-2 7 9 1 12M12 17c2 4 6 5 11 5M13 16l4-3', '#f1e04c', 2),
  R(0, 0, 40, 30, '#0c2264') + jack('#0c2264') + P('M26 12h9v7l-4.500 4-4.500-4z', '#f6efd5') + R(28, 13.500, 5, 4, '#e79a3f') + R(28, 18, 5, 2, '#65c5d6'),
  R(0, 0, 40, 30, '#4a7cc5') + P('M7 8l4 3 3-6 8-1 6 3 4 6 0 7-4 4-2 3-5 0-1-3-6 1-5-5-1-6z', '#fff'),
  R(0, 0, 40, 30, '#000') + P('M12 11l-2-4 5 2-1-5 4 3 2-5 2 5 4-3-1 5 5-2-2 4z', '#f7d64a') + R(0, 11, 40, 7, '#3d6ce0') + R(0, 18, 40, 12, '#fff') + P('M0 0L20 30H0zM40 0L20 30H40z', '#cb2b23'),
  H('#84abda', '#fff', '#84abda') + C(20, 15, 3.300, '#d29b4c'),
  H('#e73223', '#001af5', '#eea83c'),
  R(0, 0, 40, 30, '#5598c9') + R(0, 19.500, 40, 6, '#b5d16f') + R(0, 21.700, 40, 1.500, '#8bbfa0') + P('M9 3l1.500 4 4 1.500-4 1.500L9 14l-1.500-4-4-1.500 4-1.500z', '#b8323f'),
  R(0, 0, 40, 30, '#00005f') + jack('#00005f') + C(14.500, 24, 3, '#e8e8f5') + C(25, 16, 1.600, '#fff') + C(31, 9, 1.600, '#fff') + C(38, 14, 1.500, '#fff') + C(32, 26, 2, '#fff') + C(33, 18, 1, '#fff'),
  H('#b42c36', '#fff', '#b42c36'),
  H('#54b3dc', '#d83c44', '#5a9a44') + S('M22 12a3.800 3.800 0 1 0 0 6', '#fff', 1.600) + C(24.500, 15, 1.700, '#fff'),
  H('#61c9d1', '#f9e451', '#61c9d1') + P('M0 0L25 15 0 30z', '#000'),
  R(0, 0, 40, 30, '#b92c31') + P('M0 0H8l4 3-4 3 4 3-4 3 4 3-4 3 4 3-4 3 4 3-4 3H0z', '#fff'),
  R(0, 0, 40, 30, '#2f694e') + C(18, 15, 10, '#dd404a'),
  V('#07297a', '#f5c74f', '#07297a') + S('M15.500 9c0 8 1 9 4.500 9s4.500-1 4.500-9M20 8V22', '#1a1408', 2),
  R(0, 0, 40, 30, '#9e2117') + R(0, 20, 40, 10, '#5c9a31') + R(0, 0, 7, 30, '#e3b9b6') + S('M3.500 0V30', '#b6504c', 2.500).replace('/>', ' stroke-dasharray="3 1.500"/>'),
  V('#000', '#f9da4b', '#dd373c'),
  R(0, 0, 40, 30, '#1b3f82') + R(0, 0, 40, 2.600, '#b02a35') + R(0, 27.400, 40, 2.600, '#b02a35') + C(20, 15, 11.500, '#e6ede0') + C(20, 15, 8.500, '#9ab78b') + C(20, 15, 6.500, '#dfe4d6') + R(16, 10, 8, 5, '#b08a5b') + R(17, 16, 6, 4, '#6fa3a8'),
  R(0, 0, 40, 30, '#4c932c') + R(16, 0, 24, 15, '#f9d949') + R(16, 15, 24, 15, '#ce3a29'),
  R(0, 0, 40, 30, '#c32f37') + jack('#1c2a66') + P('M25 8h10v10l-5 5-5-5z', '#eee') + R(27, 11, 6, 8, '#7a6a58'),
  R(0, 0, 40, 30, '#ea5f33') + P('M0 0H40L0 30z', '#f8d551') + S('M8 25l8-4 3-7 7-2 5-5 6-1M16 22l8-2 6-8', '#e9e4dc', 3.500),
  H('#c43f2c', '#fae14c', '#37773a') + C(20, 15, 3.500, '#b98f3f') + C(20, 15.500, 1.700, '#5a9ab0'),
  H('#9f2c30', '#fff', '#2c4985'),
  R(0, 0, 40, 30, '#01108f') + P('M10 0H39V30z', '#f6cd46') + S('M5 0L36 30', '#fff', 2.400).replace('/>', ' stroke-dasharray="2.500 2.500"/>'),
  R(0, 0, 40, 30, '#62c9f8') + R(0, 10, 40, 10, '#e8f4f8') + R(0, 11.500, 40, 7, '#000'),
  R(0, 0, 40, 30, '#c63f35') + S('M14.500 0V30M0 15.500H40', '#fff', 7.500) + S('M14.500 0V30M0 15.500H40', '#1e4490', 3.800),
  R(0, 0, 40, 30, '#4f9a4b') + P('M20 3L38 15 20 27 2 15z', '#f8e04c') + C(20, 15, 7.800, '#2c4f9e') + S('M12.500 13.500q8-1 14.500 4.500', '#fff', 1.300),
  R(0, 0, 40, 30, '#fff') + [19, 24, 29].map(y => S(`M0 ${y}q3.300-4 6.600 0t6.600 0 6.600 0 6.600 0 6.600 0 6.600 0`, '#20306f', 2.600)).join('') + [4, 9, 14].map(y => S(`M20 ${y}q3.300-4 6.600 0t6.600 0 6.600 0`, '#20306f', 2.600)).join('') + jack('#20306f') + P('M24 7l6-4 7 4-3 5h-7z', '#4f8f5f') + R(29.500, 11, 2.500, 14, '#8a6a4b') + R(28, 17, 6, 5, '#dba246'),
  R(0, 0, 40, 30, '#f5e14c') + P('M0 3L40 20V29L0 11z', '#fff') + P('M0 10L40 24V30L0 15z', '#000') + S('M20 6V22M14 12c1 9 11 9 12 0M14 23h12', '#c4303a', 2),
  H('#fff', '#46976f', '#cb3b2c'),
];

// name, area, water share, capital, latitude
const rows = [
  ['Afghanistan', 652864, 0, 'Kabul', 34.53], ['Åland Islands', 1580, 0, 'Mariehamn', 60.12],
  ['Albania', 28748, .05, 'Tirana', 41.33], ['Algeria', 2381741, 0, 'Algiers', 36.7],
  ['American Samoa', 199, 0, 'Pago Pago', -14.28], ['Andorra', 468, 0, 'Andorra la Vella', 42.5],
  ['Angola', 1246700, 0, 'Luanda', -8], ['Anguilla', 91, 0, 'The Valley', 18.22],
  ['Antarctica', 14000000, null, '', null], ['Antigua and Barbuda', 440, 0, "St. John's", 17.12],
  ['Argentina', 2780400, .02, 'Buenos Aires', -34.6], ['Armenia', 29743, .05, 'Yerevan', 40.18],
  ['Aruba', 179, 0, 'Oranjestad', 12.52], ['Australia', 7692024, null, 'Canberra', -35.3],
  ['Austria', 83979, .02, 'Vienna', 48.2], ['Azerbaijan', 86600, .02, 'Baku', 40.42],
  ['Bahamas', 13878, .28, 'Nassau', 25.07], ['Bahrain', 765, 0, 'Manama', 26.22],
  ['Bangladesh', 147570, .06, 'Dhaka', 23.7], ['Barbados', 439, 0, 'Bridgetown', 13.1],
  ['Belarus', 207595, .01, 'Minsk', 53.92], ['Belgium', 30528, .06, 'Brussels', 50.85],
  ['Belize', 22966, .01, 'Belmopan', 17.25], ['Benin', 114763, 0, 'Porto-Novo', 6.15],
  ['Bermuda', 53, .27, 'Hamilton', 32.3], ['Bhutan', 38394, .01, 'Thimphu', 27.47],
  ['Bolivia, Plurinational State of', 1098581, .01, 'Sucre', -19.05],
  ['Bonaire, Sint Eustatius and Saba', 328, 0, 'Kralendijk', 12.18],
  ['Bosnia and Herzegovina', 51197, .01, 'Sarajevo', 43.87], ['Botswana', 581730, .03, 'Gaborone', -24.65],
  ['Bouvet Island', 49, .93, '', null], ['Brazil', 8515767, .01, 'Brasília', -15.78],
  ['British Indian Ocean Territory', 60, 0, '', null], ['Brunei Darussalam', 5765, .09, 'Bandar Seri Begawan', 4.05],
  ['Bulgaria', 110994, 0, 'Sofia', 42.68],
];

const columns = [
  { name: 'Name', type: 'card', frozen: 1, key: 1, note: 'Primary key', stat: ['COUNT', '250'], w: 156, bars: [156] },
  { name: 'Flag', type: 'image', frozen: 1, note: 'Primary key candidate', stat: ['COUNT', '250'], w: 156, bars: [156] },
  { name: 'Area', type: 'int', note: '18 ranges from 0 to 18000000', stat: ['MAX', '17,075,200'], w: 16,
    bars: [156, 12, 4, 4, 0, 0, 0, 4, 4, 4, 0, 0, 0, 0, 4, 0, 0, 4] },
  { name: 'Water', type: 'dec', note: '25 ranges from 0 to 0.938', stat: ['MAX', '0.930'], w: 10, blank: 6,
    bars: [156, 22, 8, 4, 4, 4, 0, 4, 0, 0, 0, 0, 0, 0, 0, 0, 0, 0, 0, 4, 0, 0, 4, 4, 4] },
  { name: 'Capital', type: 'card', note: '2 frequencies from 1 to 2', stat: ['COUNT', '244'], w: 156, blank: 8, bars: [156, 4] },
  { name: 'Capital Latitude', type: 'coord', note: '27 ranges from -55 to 80', stat: ['MAX', '78.220'], w: 10, blank: 8, negative: 11,
    bars: [12, 0, 6, 6, 18, 40, 46, 58, 52, 40, 46, 86, 98, 156, 144, 52, 52, 64, 98, 116, 86, 64, 34, 28, 0, 0, 6] },
];

const each = f => columns.map(f).join('');
const fr = c => c.frozen ? 'frozen ' : '';
const barColor = (c, i) => i < (c.negative || 0) ? '#d1615d' : c.w === 156 ? '#b8afac' : '#6a9f58';
let html = each(c => `<div class="th${c.key ? ' keyed' : ''}">${slot(c.type)}<span class="name">${c.name}</span>${
  c.key ? `<span class="extra">${use('cardo', 'cardo')}${use('key', 'key')}</span>` : ''}</div>`);
html += each(c => `<div class="quality"><i style="width:${c.blank || 0}px"></i></div>`);
html += each(c => `<div class="${fr(c)}hist"><div class="bars">${c.bars.map((h, i) =>
  `<i style="width:${c.w}px;height:${h || 2}px;background:${barColor(c, i)}${h ? '' : ';opacity:.4'}"></i>`).join('')}</div><p>${c.note}</p></div>`);
html += each(c => `<div class="stat"><span>${c.stat[0]}</span><b>${c.stat[1]}</b></div>`);

const bar = (px, cls) => `<i class="bar ${cls}${px < 2.5 ? ' min' : ''}" style="width:${Math.max(2, px)}px"></i>`;
rows.forEach(([name, area, water, capital, lat], i) => {
  html += `<div class="frozen cell"><span class="txt">${name}</span></div>`;
  html += `<div class="frozen cell flagcell"><svg class="flag" viewBox="0 0 40 30" preserveAspectRatio="none">${flags[i]}</svg></div>`;
  html += `<div class="cell">${bar(area / 18e6 * 320, '')}<span class="num">${area.toLocaleString('en-US')}</span></div>`;
  html += `<div class="cell">${water === null ? '' : bar(water * 316, 'water') + `<span class="num">${water ? water.toFixed(3) : 0}</span>`}</div>`;
  html += `<div class="cell"><span class="txt">${capital}</span></div>`;
  html += `<div class="cell">${lat === null ? '' : `<span class="num">${lat.toFixed(3)}</span><span class="gauge"><i class="${
    lat < 0 ? 'neg' : ''}" style="left:${(lat + 55) / 135 * 158 - 2}px"></i></span>`}</div>`;
});
document.getElementById('sheet').innerHTML = html;
```
